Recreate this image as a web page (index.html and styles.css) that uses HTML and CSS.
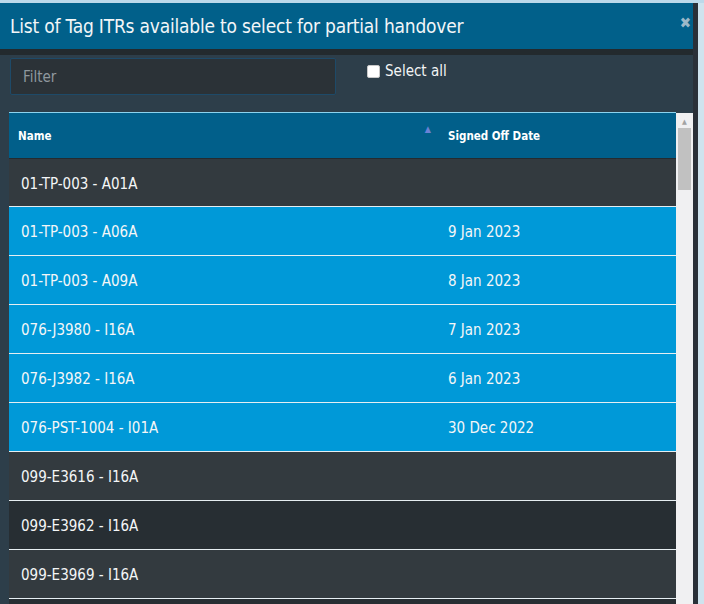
FILE: index.html
```html
<!DOCTYPE html>
<html>
<head>
<meta charset="utf-8">
<link rel="stylesheet" href="styles.css">
</head>
<body>
<div class="page-strip"></div>
<div class="modal">
  <div class="modal-header">
    <span class="modal-title">List of Tag ITRs available to select for partial handover</span>
    <span class="close">&#10006;</span>
  </div>
  <div class="modal-sep"></div>
  <div class="modal-body">
    <div class="toolbar">
      <input class="filter" type="text" placeholder="Filter">
      <label class="select-all"><span class="cb"></span>Select all</label>
    </div>
    <div class="grid-wrap">
      <div class="grid">
        <div class="grid-head">
          <div class="col-name">Name <span class="sort">&#9650;</span></div>
          <div class="col-date">Signed Off Date</div>
        </div>
        <div class="row odd"><div class="col-name">01-TP-003 - A01A</div><div class="col-date"></div></div>
        <div class="row sel"><div class="col-name">01-TP-003 - A06A</div><div class="col-date">9 Jan 2023</div></div>
        <div class="row sel"><div class="col-name">01-TP-003 - A09A</div><div class="col-date">8 Jan 2023</div></div>
        <div class="row sel"><div class="col-name">076-J3980 - I16A</div><div class="col-date">7 Jan 2023</div></div>
        <div class="row sel"><div class="col-name">076-J3982 - I16A</div><div class="col-date">6 Jan 2023</div></div>
        <div class="row sel"><div class="col-name">076-PST-1004 - I01A</div><div class="col-date">30 Dec 2022</div></div>
        <div class="row odd"><div class="col-name">099-E3616 - I16A</div><div class="col-date"></div></div>
        <div class="row even"><div class="col-name">099-E3962 - I16A</div><div class="col-date"></div></div>
        <div class="row odd"><div class="col-name">099-E3969 - I16A</div><div class="col-date"></div></div>
        <div class="row even"></div>
      </div>
      <div class="scrollbar">
        <div class="arrow">&#9650;</div>
        <div class="thumb"></div>
      </div>
    </div>
  </div>
</div>
</body>
</html>
```
FILE: styles.css
```css
html, body {
  margin: 0;
  padding: 0;
  height: 604px;
  overflow: hidden;
  background: #cfe3ee;
  font-family: "DejaVu Sans Condensed", "Liberation Sans", sans-serif;
}
.page-strip {
  height: 3px;
  background: #bcd9ea;
}
.modal {
  width: 693px;
  border-right: 5px solid #2a3038;
  background: #2d3e4a;
  height: 601px;
  overflow: hidden;
}
.modal-header {
  height: 46px;
  background: #01608a;
  display: flex;
  align-items: center;
  justify-content: space-between;
  padding: 0 2px 0 10px;
}
.modal-title {
  color: #f2f6f8;
  font-size: 19px;
  letter-spacing: -0.2px;
}
.close {
  color: #9bb8c8;
  font-size: 15px;
  font-weight: bold;
  margin-top: -6px;
}
.modal-sep {
  height: 6px;
  background: #232a2e;
}
.modal-body {
  padding: 3px 0 0 9px;
}
.toolbar {
  display: flex;
  align-items: flex-start;
  height: 54px;
}
.filter {
  box-sizing: border-box;
  width: 326px;
  height: 37px;
  margin-left: 1px;
  background: #2b3237;
  border: 1px solid #1e4a68;
  border-radius: 2px;
  padding: 0 12px;
  font-family: inherit;
  font-size: 15px;
  color: #ddd;
  outline: none;
}
.filter::placeholder {
  color: #8f989e;
}
.select-all {
  display: flex;
  align-items: center;
  margin-left: 31px;
  margin-top: 4px;
  color: #f2f4f5;
  font-size: 15px;
}
.cb {
  width: 11px;
  height: 11px;
  background: #fff;
  border: 1px solid #c8c8c8;
  border-radius: 2px;
  margin-right: 5px;
}
.grid-wrap {
  display: flex;
}
.grid {
  width: 667px;
}
.grid-head {
  height: 45px;
  background: #015f8a;
  border-top: 1px solid #8cd3ee;
  display: flex;
  align-items: center;
  color: #fff;
  font-weight: bold;
  font-size: 11.5px;
}
.grid-head .col-name {
  padding-left: 9px;
  position: relative;
}
.sort {
  position: absolute;
  right: 8px;
  top: -5px;
  color: #6a82d6;
  font-size: 9px;
}
.col-name {
  width: 430px;
  padding-left: 12px;
  box-sizing: border-box;
}
.col-date {
  flex: 1;
  padding-left: 9px;
}
.row {
  height: 48px;
  border-bottom: 1px solid #e6eef2;
  display: flex;
  align-items: center;
  color: #f4f6f7;
  font-size: 15px;
  padding-top: 2px;
  box-sizing: content-box;
}
.row.odd { background: #333a3f; }
.row.even { background: #272e33; }
.row.sel { background: #0099d8; }
.grid-head + .row {
  border-top: 1px solid #252b2f;
  height: 47px;
}
.row { height: 46px; }
.grid-head + .row { height: 45px; }
.scrollbar {
  width: 17px;
  margin-top: 1px;
  height: 492px;
  background: #f0f0f2;
}
.arrow {
  text-align: center;
  font-size: 7px;
  color: #a3a3a3;
  padding-top: 5px;
  height: 10px;
}
.thumb {
  margin: 0 2px;
  height: 62px;
  background: #c1c1c1;
}
```
